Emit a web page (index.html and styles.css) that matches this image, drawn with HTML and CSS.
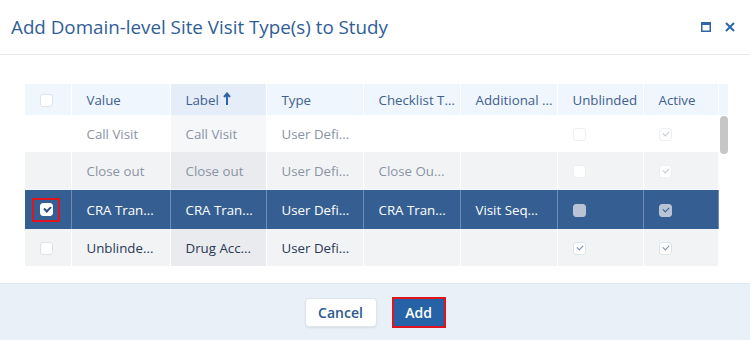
FILE: index.html
```html
<!DOCTYPE html>
<html lang="en">
<head>
    <meta charset="UTF-8">
    <title>Add Domain-level Site Visit Type(s) to Study</title>
    <link rel="stylesheet" href="styles.css">
</head>
<body>
    <div class="dialog">
        <div class="dlg-header">
            <h1 class="dlg-title">Add Domain-level Site Visit Type(s) to Study</h1>
            <div class="dlg-tools">
                <svg width="10" height="10" viewBox="0 0 10 10"><rect x="0.75" y="0.75" width="8.5" height="8.5" fill="none" stroke="#2e64a8" stroke-width="1.5"/><rect x="0" y="0" width="10" height="3" fill="#2e64a8"/></svg>
                <svg width="10" height="10" viewBox="0 0 10 10"><path d="M1 1 L9 9 M9 1 L1 9" stroke="#2e64a8" stroke-width="2"/></svg>
            </div>
        </div>

        <div class="dlg-body">
            <div class="grid">
                <table class="grid-head">
                    <colgroup>
                        <col class="c-chk"><col class="c-val"><col class="c-lbl"><col class="c-type"><col class="c-chl"><col class="c-add"><col class="c-unb"><col class="c-act"><col class="c-sb">
                    </colgroup>
                    <tr>
                        <th class="chk"><span class="box"></span></th>
                        <th>Value</th>
                        <th class="sorted">Label <svg class="arrow" width="8" height="14" viewBox="0 0 8 14"><path d="M4 13 V2 M1 5 L4 1.5 L7 5" fill="none" stroke="#2e64a8" stroke-width="2"/></svg></th>
                        <th>Type</th>
                        <th>Checklist T...</th>
                        <th>Additional ...</th>
                        <th>Unblinded</th>
                        <th>Active</th>
                        <th></th>
                    </tr>
                </table>
                <div class="grid-scroll">
                    <table class="grid-body">
                        <colgroup>
                            <col class="c-chk"><col class="c-val"><col class="c-lbl"><col class="c-type"><col class="c-chl"><col class="c-add"><col class="c-unb"><col class="c-act">
                        </colgroup>
                        <tr class="disabled">
                            <td></td>
                            <td>Call Visit</td>
                            <td class="sorted">Call Visit</td>
                            <td>User Defi...</td>
                            <td></td>
                            <td></td>
                            <td><span class="box"></span></td>
                            <td><span class="box on"></span></td>
                        </tr>
                        <tr class="disabled alt">
                            <td></td>
                            <td>Close out</td>
                            <td class="sorted">Close out</td>
                            <td>User Defi...</td>
                            <td>Close Ou...</td>
                            <td></td>
                            <td><span class="box"></span></td>
                            <td><span class="box on"></span></td>
                        </tr>
                        <tr class="selected">
                            <td class="chk"><span class="mark"><span class="box on"></span></span></td>
                            <td>CRA Tran...</td>
                            <td class="sorted">CRA Tran...</td>
                            <td>User Defi...</td>
                            <td>CRA Tran...</td>
                            <td>Visit Seq...</td>
                            <td><span class="box fill"></span></td>
                            <td><span class="box fill on"></span></td>
                        </tr>
                        <tr class="alt">
                            <td class="chk"><span class="box"></span></td>
                            <td>Unblinde...</td>
                            <td class="sorted">Drug Acc...</td>
                            <td>User Defi...</td>
                            <td></td>
                            <td></td>
                            <td><span class="box on"></span></td>
                            <td><span class="box on"></span></td>
                        </tr>
                    </table>
                    <div class="scrollbar"><div class="thumb"></div></div>
                </div>
            </div>
        </div>

        <div class="dlg-footer">
            <button class="btn btn-cancel">Cancel</button>
            <button class="btn btn-add">Add</button>
        </div>
    </div>
</body>
</html>
```

FILE: styles.css
```css
body {
    margin: 0;
    font-family: "Open Sans", "Noto Sans", Arial, sans-serif;
    background-color: #fff;
}
.dialog {
    width: 750px;
    height: 340px;
    display: flex;
    flex-direction: column;
    background-color: #fff;
}
.dlg-header {
    height: 55px;
    display: flex;
    align-items: center;
    justify-content: space-between;
    padding: 0 15px 0 11px;
    border-bottom: 1px solid #e8ebef;
    box-sizing: border-box;
}
.dlg-title {
    margin: 0;
    font-size: 18.8px;
    font-weight: 400;
    color: #2f5d96;
}
.dlg-tools {
    display: flex;
    gap: 14px;
    align-items: center;
}
.dlg-body {
    flex: 1;
    padding: 29px 0 0 25px;
}
.grid {
    width: 703px;
}
table {
    border-collapse: collapse;
    table-layout: fixed;
}
.grid-head {
    width: 703px;
}
.grid-body {
    width: 693px;
}
.c-chk { width: 46px; }
.c-val { width: 99px; }
.c-lbl { width: 96px; }
.c-type { width: 97px; }
.c-chl { width: 97px; }
.c-add { width: 97px; }
.c-unb { width: 86px; }
.c-act { width: 75px; }
.c-sb { width: 10px; }
th, td {
    font-size: 13.3px;
    text-align: left;
    padding: 0 0 0 15px;
    white-space: nowrap;
    overflow: hidden;
}
th {
    height: 31px;
    font-weight: 400;
    color: #40618e;
    background-color: #f0f6fd;
    border-right: 1px solid #fff;
}
th.sorted {
    background-color: #e4edf8;
}
.arrow {
    vertical-align: -1px;
    margin-left: 1px;
}
td {
    height: 37px;
    color: #2a3954;
    background-color: #fff;
    border-right: 1px solid #fff;
}
td.sorted {
    background-color: #f6f7f9;
}
tr.alt td {
    background-color: #f2f3f5;
}
tr.alt td.sorted {
    background-color: #e9ebee;
}
tr.disabled td {
    color: #8a93a5;
}
tr.selected td {
    height: 39px;
    background-color: #355f92;
    color: #fff;
    border-right: 1px solid #6f8db4;
    border-top: 1px solid #f5f6f8;
}
.box {
    display: inline-block;
    width: 13px;
    height: 13px;
    border: 1px solid #dde3ea;
    border-radius: 3px;
    background-color: #fff;
    vertical-align: middle;
    position: relative;
    box-sizing: border-box;
}
tr.disabled .box {
    border-color: #eceff3;
}
.box.on::after {
    content: "";
    position: absolute;
    left: 3.5px;
    top: 2px;
    width: 5px;
    height: 3px;
    border-left: 1.3px solid #7d90b0;
    border-bottom: 1.3px solid #7d90b0;
    transform: rotate(-45deg);
}
tr.disabled .box.on::after {
    border-color: #c3cad6;
}
.box.fill {
    background-color: #b8c4d6;
    border-color: #b8c4d6;
}
.box.fill.on::after {
    border-color: #355f92;
}
.mark {
    display: inline-flex;
    align-items: center;
    justify-content: center;
    width: 28px;
    height: 24px;
    margin-left: -8px;
    border: 2px solid #e0141e;
    box-sizing: border-box;
}
.mark .box {
    border-color: #fff;
}
.mark .box.on::after {
    border-color: #2a4f80;
    border-width: 0 0 2px 2px;
}
.grid-scroll {
    display: flex;
    height: 151px;
}
.scrollbar {
    width: 10px;
    padding-top: 1px;
}
.thumb {
    height: 38px;
    margin-left: 1px;
    width: 8px;
    border-radius: 4px;
    background-color: #c6c6c6;
}
.dlg-footer {
    height: 57px;
    background-color: #eaf0f7;
    border-top: 1px solid #e0e7f0;
    box-sizing: border-box;
    display: flex;
    align-items: center;
    justify-content: center;
    gap: 15px;
}
.btn {
    font-family: "Open Sans", "Noto Sans", Arial, sans-serif;
    font-size: 14px;
    font-weight: 600;
    border-radius: 4px;
    cursor: pointer;
}
.btn-cancel {
    width: 72px;
    height: 29px;
    background-color: #fff;
    color: #2c5a8f;
    border: 1px solid #dfe5ec;
    box-shadow: 0 1px 2px rgba(0,0,0,0.08);
}
.btn-add {
    width: 54px;
    height: 31px;
    background-color: #2563a6;
    color: #fff;
    border: 2px solid #e0141e;
    border-radius: 0;
}
```
